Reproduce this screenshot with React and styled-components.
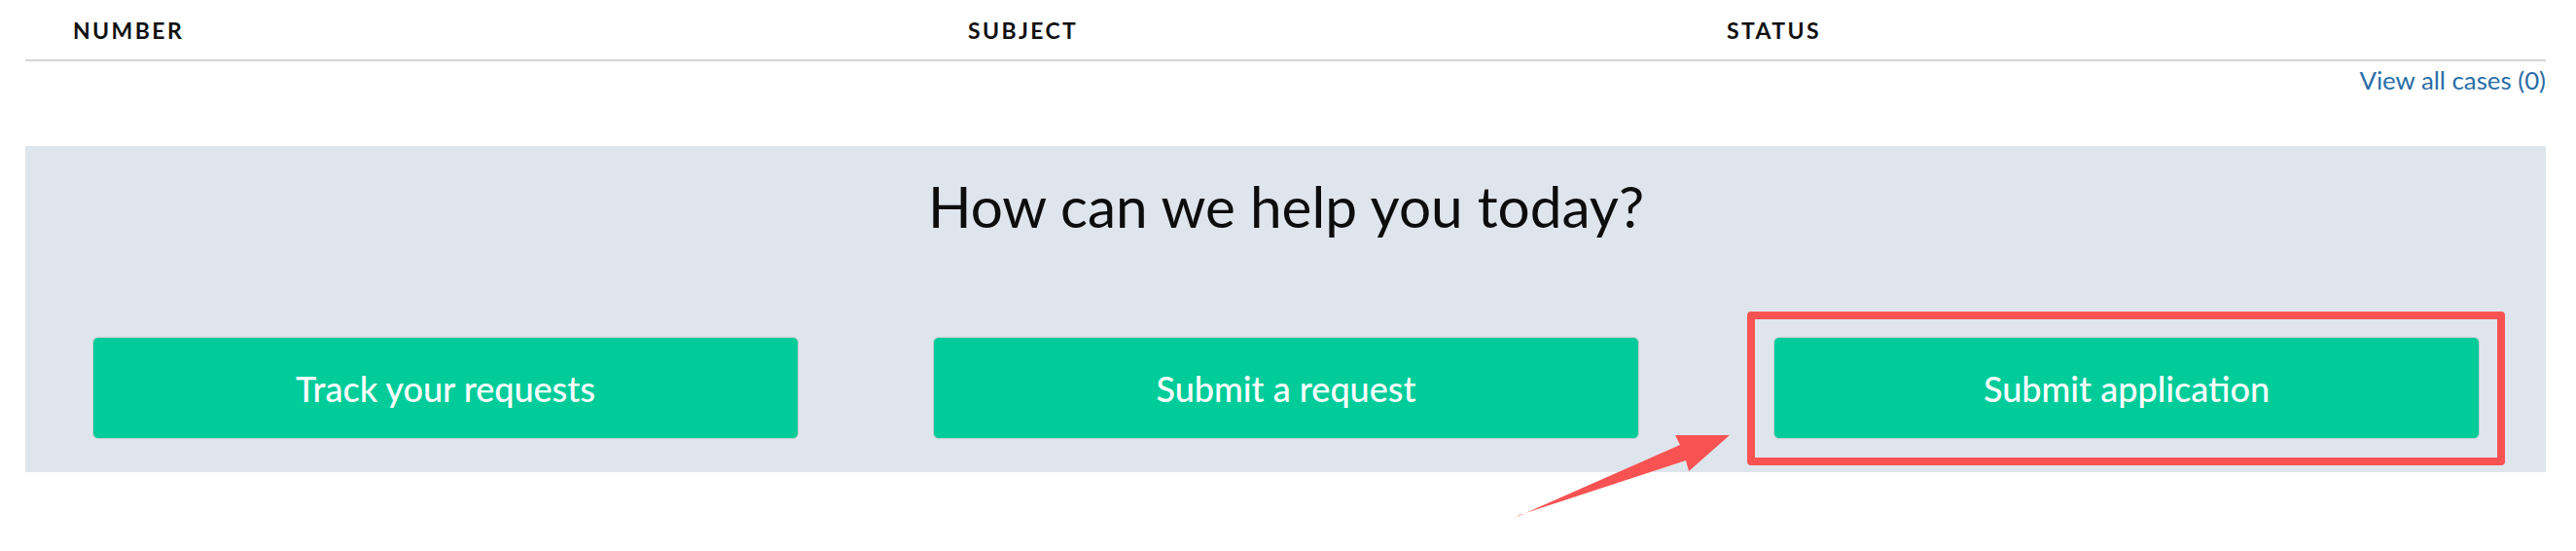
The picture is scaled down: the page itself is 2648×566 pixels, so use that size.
import React from "react";
import styled, { createGlobalStyle } from "styled-components";

const Global = createGlobalStyle`
  html, body { margin: 0; padding: 0; background: #ffffff; }
  body { font-family: Lato, "Open Sans", Arial, sans-serif; color: #111; }
`;

const Page = styled.div`
  position: relative;
  width: 2648px;
  height: 566px;
  padding: 0 31px 0 26px;
  box-sizing: border-box;
  overflow: hidden;
`;

const HeaderRow = styled.div`
  display: grid;
  grid-template-columns: 920px 780px 1fr;
  align-items: center;
  height: 61px;
  border-bottom: 2px solid #d6d6d6;
`;

const HeaderCell = styled.div`
  padding-left: 49px;
  font-family: Lato, sans-serif;
  font-weight: 700;
  font-size: 23px;
  letter-spacing: 2.4px;
  line-height: 26px;
  color: #111;
  text-transform: uppercase;
`;

const LinkRow = styled.div`
  display: flex;
  justify-content: flex-end;
  padding-top: 4px;
  height: 87px;
  box-sizing: border-box;
`;

const CasesLink = styled.a`
  font-family: Lato, sans-serif;
  font-size: 25.8px;
  line-height: 30px;
  color: #2a6da6;
  text-decoration: none;
`;

const HelpPanel = styled.section`
  background: #dfe5ed;
  padding: 25px 68px 34px 69px;
  display: flex;
  flex-direction: column;
  align-items: stretch;
`;

const Title = styled.h2`
  margin: 0 0 99px 0;
  font-family: Lato, sans-serif;
  font-weight: 400;
  font-size: 58.5px;
  line-height: 72px;
  text-align: center;
  color: #0d0d0d;
`;

const ButtonGrid = styled.div`
  display: grid;
  grid-template-columns: repeat(3, 1fr);
  gap: 138px;
`;

const Slot = styled.div`
  position: relative;
`;

const ActionButton = styled.button`
  width: 100%;
  height: 105px;
  display: flex;
  align-items: center;
  justify-content: center;
  background: #00cc9a;
  border: 1px solid #c9cdd1;
  border-radius: 6px;
  color: #ffffff;
  font-family: Lato, sans-serif;
  font-weight: 500;
  font-size: 36px;
  cursor: pointer;
`;

const Highlight = styled.div`
  position: absolute;
  inset: -26px -26px -27px -27px;
  border: 8px solid #f85352;
  border-radius: 4px;
  pointer-events: none;
`;

const ArrowSvg = styled.svg`
  position: absolute;
  left: 0;
  top: 0;
  pointer-events: none;
`;

export default function App() {
  return (
    <>
      <Global />
      <Page>
        <HeaderRow>
          <HeaderCell>Number</HeaderCell>
          <HeaderCell>Subject</HeaderCell>
          <HeaderCell>Status</HeaderCell>
        </HeaderRow>
        <LinkRow>
          <CasesLink href="#">View all cases (0)</CasesLink>
        </LinkRow>
        <HelpPanel>
          <Title>How can we help you today?</Title>
          <ButtonGrid>
            <Slot>
              <ActionButton>Track your requests</ActionButton>
            </Slot>
            <Slot>
              <ActionButton>Submit a request</ActionButton>
            </Slot>
            <Slot>
              <ActionButton>Submit application</ActionButton>
              <Highlight />
            </Slot>
          </ButtonGrid>
        </HelpPanel>
        <ArrowSvg width="2648" height="566" viewBox="0 0 2648 566">
          <polygon
            points="1559,531 1727,457 1722,447 1778,447 1736,484 1733,473 1562,529"
            fill="#f85352"
          />
        </ArrowSvg>
      </Page>
    </>
  );
}
